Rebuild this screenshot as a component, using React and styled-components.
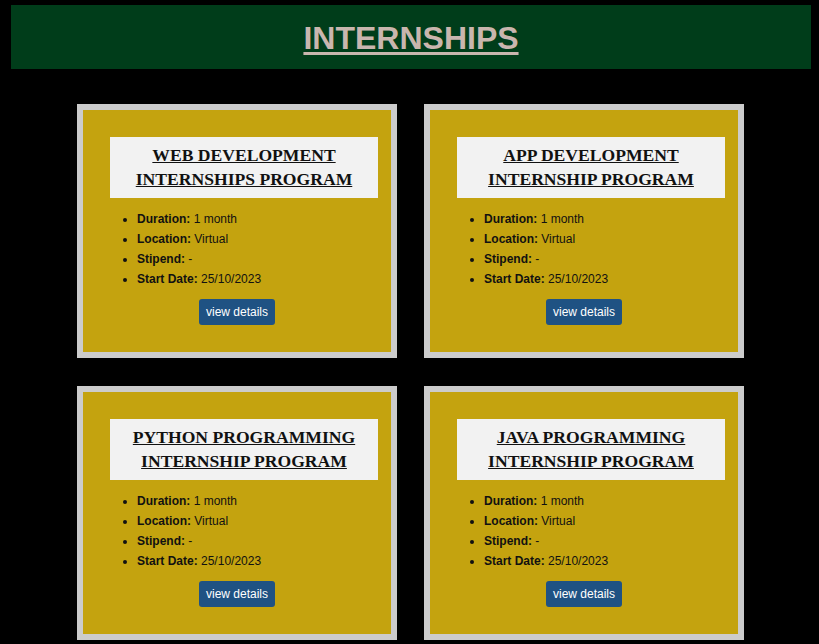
import React from "react";
import styled, { createGlobalStyle } from "styled-components";

const GlobalStyle = createGlobalStyle`
  html, body {
    margin: 0;
    padding: 0;
    background: #000;
  }
  body {
    font-family: "Liberation Sans", Arial, sans-serif;
  }
`;

const programs = [
  { title: "WEB DEVELOPMENT INTERNSHIPS PROGRAM" },
  { title: "APP DEVELOPMENT INTERNSHIP PROGRAM" },
  { title: "PYTHON PROGRAMMING INTERNSHIP PROGRAM" },
  { title: "JAVA PROGRAMMING INTERNSHIP PROGRAM" },
];

const App = () => {
  return (
    <Page>
      <GlobalStyle />
      <Header>
        <Heading>INTERNSHIPS</Heading>
      </Header>
      <Grid>
        {programs.map((p) => (
          <Card key={p.title}>
            <TitleBox>
              <Title>{p.title}</Title>
            </TitleBox>
            <Details>
              <li><b>Duration:</b> 1 month</li>
              <li><b>Location:</b> Virtual</li>
              <li><b>Stipend:</b> -</li>
              <li><b>Start Date:</b> 25/10/2023</li>
            </Details>
            <ButtonRow>
              <Button>view details</Button>
            </ButtonRow>
          </Card>
        ))}
      </Grid>
    </Page>
  );
};

export default App;

const Page = styled.div`
  padding: 5px 8px 0 11px;
  min-height: 644px;
  box-sizing: border-box;
  background: #000;
`;

const Header = styled.header`
  background: #003d1a;
  height: 64px;
  display: flex;
  align-items: center;
  justify-content: center;
`;

const Heading = styled.h1`
  margin: 0;
  font-family: "Liberation Sans", Arial, sans-serif;
  font-size: 32px;
  font-weight: bold;
  color: #c9b6ae;
  text-decoration: underline;
  text-underline-offset: 3px;
  text-decoration-thickness: 3px;
  line-height: 1;
  padding-top: 2px;
`;

const Grid = styled.main`
  display: grid;
  grid-template-columns: repeat(2, 320px);
  column-gap: 27px;
  row-gap: 28px;
  padding: 35px 0 0 66px;
`;

const Card = styled.section`
  border: 6px solid #cccccc;
  background: #c4a30f;
  padding: 27px 0;
`;

const TitleBox = styled.div`
  background: #f2f2f2;
  margin: 0 13px 0 27px;
  padding: 6px 0 7px;
  text-align: center;
`;

const Title = styled.h2`
  margin: 0;
  font-family: "Liberation Serif", "Times New Roman", serif;
  font-size: 17.6px;
  font-weight: bold;
  line-height: 24px;
  color: #111;
  text-decoration: underline;
  padding: 0 14px;
`;

const Details = styled.ul`
  margin: 11px 0 10px;
  padding-left: 54px;
  font-size: 12px;
  line-height: 20px;
  color: #111;

  li b {
    font-weight: bold;
  }
`;

const ButtonRow = styled.div`
  display: flex;
  justify-content: center;
`;

const Button = styled.button`
  height: 26px;
  padding: 0 7px;
  border: none;
  border-radius: 3px;
  background: #1f5283;
  color: #fff;
  font-family: "Liberation Sans", Arial, sans-serif;
  font-size: 12px;
  cursor: pointer;
`;
